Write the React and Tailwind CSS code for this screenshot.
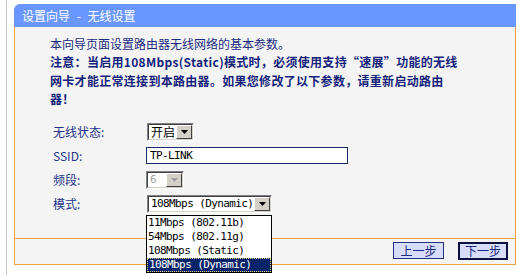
import React from 'react'

const cjk = "font-['Noto_Sans_CJK_SC','Noto_Sans',sans-serif]"
const mono = "font-['DejaVu_Sans_Mono','Noto_Sans_CJK_SC',monospace] text-[11px] tracking-[-0.6px]"

const Arrow = ({ disabled }) => (
  <svg width="7" height="4" viewBox="0 0 7 4">
    <polygon points="0,0 7,0 3.5,4" fill={disabled ? '#a0a0a0' : '#000'} />
  </svg>
)

const Select = ({ width, children, disabled, latin }) => (
  <div className={`${width} h-[18px] border border-t-[#808080] border-l-[#808080] border-b-white border-r-white`}>
    <div className="h-full flex border border-t-[#404040] border-l-[#404040] border-b-[#d4d0c8] border-r-[#d4d0c8]">
      <div
        className={`flex-1 bg-white pl-[2px] flex items-center leading-none whitespace-nowrap ${latin ? mono : 'text-[12px]'} ${disabled ? 'text-[#a0a0a0]' : 'text-black'}`}
      >
        {children}
      </div>
      <div className="w-[16px] bg-[#d4d0c8] border border-t-white border-l-white border-b-[#404040] border-r-[#404040] flex items-center justify-center">
        <Arrow disabled={disabled} />
      </div>
    </div>
  </div>
)

const options = ['11Mbps (802.11b)', '54Mbps (802.11g)', '108Mbps (Static)', '108Mbps (Dynamic)']

const Row = ({ label, children }) => (
  <div className="h-[24px] flex items-center">
    <div className="w-[94px] text-[#24348a]">{label}</div>
    {children}
  </div>
)

export default function App() {
  return (
    <div className={`w-[523px] h-[278px] bg-white flex text-[12px] ${cjk}`}>
      <div className="ml-[6px] w-px h-[275px] bg-[#c8c8cc]" />
      <div className="ml-[7px] mt-[4px] w-[502px] flex flex-col">
        <div className="h-[23px] bg-[#6a97ff] rounded-tl-[6px] text-white pl-[8px] flex items-center leading-none whitespace-pre [word-spacing:4px]">
          设置向导 - 无线设置
        </div>

        <div className="h-[211px] bg-[#f4f4f4] border-x border-[#f0a040] pl-[35px] pt-[8px]">
          <div className="leading-[18.4px] text-[#1c2b7e] whitespace-nowrap">
            <div>本向导页面设置路由器无线网络的基本参数。</div>
            <div className="font-bold text-[#16247c] tracking-[0.3px]">
              注意：当启用108Mbps(Static)模式时，必须使用支持“速展”功能的无线
              <br />
              网卡才能正常连接到本路由器。如果您修改了以下参数，请重新启动路由
              <br />
              器！
            </div>
          </div>

          <div className="mt-[11px] pl-[3px]">
            <Row label="无线状态:">
              <Select width="w-[47px]">开启</Select>
            </Row>
            <Row label="SSID:">
              <div className={`w-[202px] h-[17px] -ml-[1px] border border-[#1c2a6c] bg-white pl-[3px] flex items-center text-black leading-none ${mono}`}>
                TP-LINK
              </div>
            </Row>
            <Row label="频段:">
              <div className="-ml-[1px]">
                <Select width="w-[38px]" disabled latin>6</Select>
              </div>
            </Row>
            <Row label="模式:">
              <div className="relative">
                <Select width="w-[125px]" latin>108Mbps (Dynamic)</Select>
                <div className="absolute left-[-1px] top-[20px] w-[126px] border border-black bg-white z-10">
                  {options.map((o, i) => (
                    <div
                      key={o}
                      className={`h-[14px] pl-[1px] flex items-center leading-none whitespace-nowrap ${mono} ${
                        i === 3 ? 'bg-[#0a246a] text-white border border-dotted border-[#e6d58a] pl-0' : 'text-black'
                      }`}
                    >
                      {o}
                    </div>
                  ))}
                </div>
              </div>
            </Row>
          </div>
        </div>

        <div className="h-[27px] bg-[#f4f4f4] border border-[#f0a040] flex justify-end items-start pt-[3px] pr-[7px] gap-[14px]">
          <button className="w-[51px] h-[17px] border border-[#23307a] bg-[#d8dcfb] text-[#1b2a80] leading-none flex items-center justify-center">
            上一步
          </button>
          <button className="w-[50px] h-[18px] border-2 border-[#0b1240] bg-[#d8dcfb] text-[#1b2a80] leading-none flex items-center justify-center">
            下一步
          </button>
        </div>
      </div>
    </div>
  )
}
